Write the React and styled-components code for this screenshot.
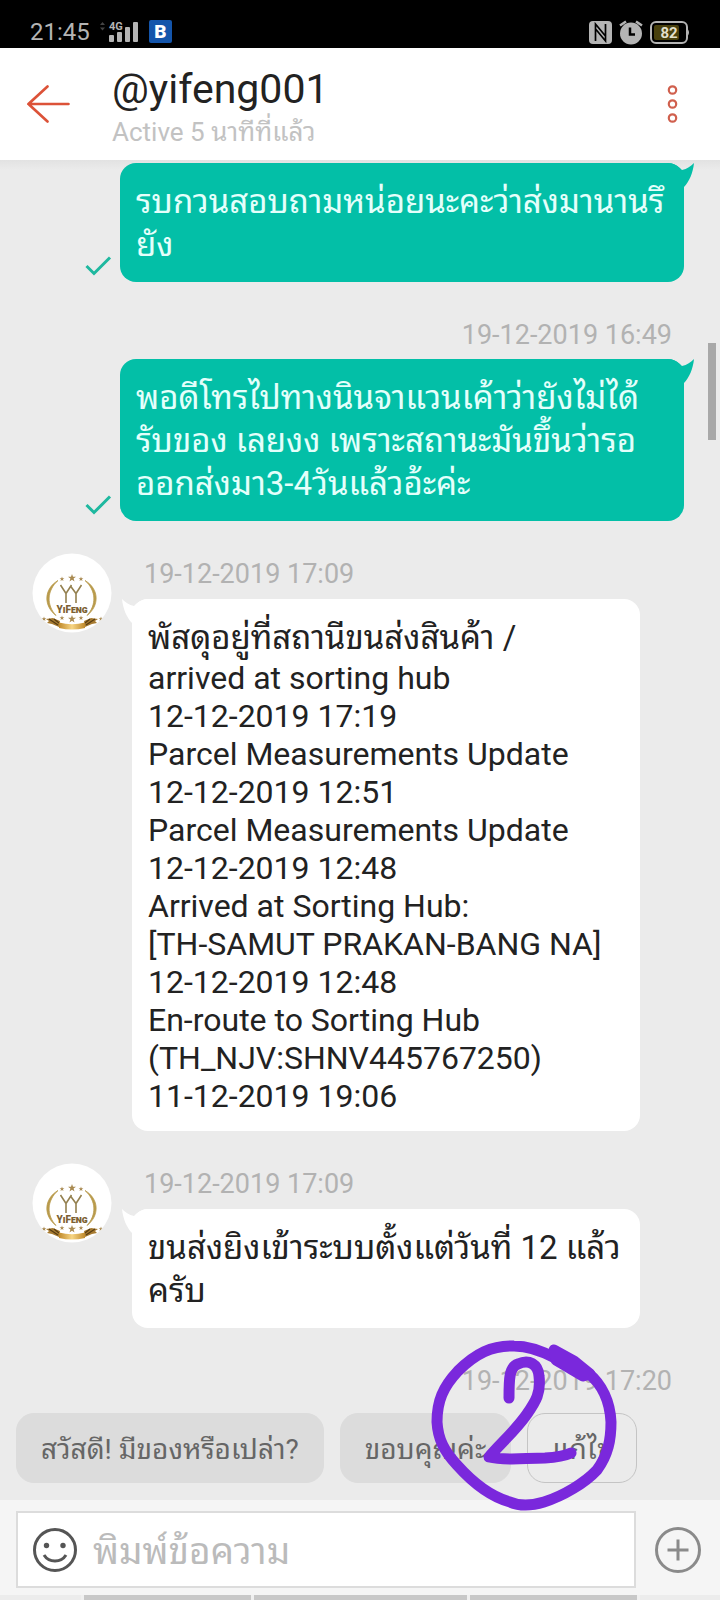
import React from 'react';
import styled, { createGlobalStyle } from 'styled-components';

const GlobalStyle = createGlobalStyle`
    * {
        box-sizing: border-box;
    }
    body {
        margin: 0;
        background: #ebebeb;
        font-family: Roboto, "Noto Sans Thai Looped", "Noto Looped Thai", Loma, Garuda, "Noto Sans Thai", "Noto Sans", sans-serif;
    }
    button, input {
        font-family: inherit;
        margin: 0;
        padding: 0;
        border: 0;
        background: none;
    }
    svg {
        display: block;
        flex: none;
    }
`;

const Page = styled.div`
    min-height: 100vh;
    display: flex;
    flex-direction: column;
    overflow: hidden;
`;
const StatusBar = styled.div`
    display: flex;
    align-items: center;
    justify-content: space-between;
    height: 48px;
    padding: 16px 30px 0;
    background: #000;
    color: #b4b4b4;
`;
const StatusGroup = styled.div`
    display: flex;
    align-items: center;
    gap: ${props => props.$gap}px;
`;
const Clock = styled.span`
    font-size: 24px;
    line-height: 32px;
`;
const TopBar = styled.header`
    display: flex;
    align-items: center;
    height: 112px;
    padding: 0 28px 0 27px;
    background: #fff;
`;
const IconButton = styled.button`
    display: flex;
    align-items: center;
    justify-content: center;
    flex: none;
`;
const Heading = styled.div`
    flex: 1;
    padding: 8px 0 0 42px;
`;
const Name = styled.h1`
    margin: 0;
    font-weight: 400;
    font-size: 41px;
    line-height: 48px;
    color: #222;
`;
const Activity = styled.p`
    margin: 0;
    font-size: 26px;
    line-height: 38px;
    color: #c2c2c2;
`;
const Chat = styled.main`
    position: relative;
    display: flex;
    flex-direction: column;
    gap: 32px;
    padding-top: 3px;
    background: linear-gradient(#e2e2e2, #ebebeb 10px);
`;
const ScrollThumb = styled.div`
    position: absolute;
    top: 183px;
    right: 4px;
    width: 8px;
    height: 97px;
    background: #a8a8a8;
`;
const Outgoing = styled.div`
    display: flex;
    flex-direction: column;
    gap: 8px;
    padding: 0 36px 0 85px;
`;
const SentRow = styled.div`
    display: flex;
    align-items: flex-end;
    gap: 8px;
`;
const Incoming = styled.div`
    display: flex;
    align-items: flex-start;
    gap: 20px;
    padding: 0 80px 0 32px;
`;
const Column = styled.div`
    flex: 1;
    min-width: 0;
    display: flex;
    flex-direction: column;
    gap: 9px;
`;
const Time = styled.time`
    padding: 5px 12px 0;
    font-size: 27px;
    line-height: 32px;
    color: #b2b2b2;
    text-align: ${props => props.$align};
`;
const Bubble = styled.div`
    position: relative;
    flex: 1;
    min-width: 0;
    padding: 17px 16px 16px;
    border-radius: 16px;
    background: ${props => props.$own ? '#03bfa7' : '#fff'};
    color: ${props => props.$own ? '#e4fffb' : '#222'};
`;
const Line = styled.div`
    white-space: nowrap;
    font-size: ${props => props.$thai ? 33 : 32}px;
    line-height: ${props => props.$thai ? 43 : 38}px;
`;
const Tail = styled.svg`
    position: absolute;
    top: 0;
    ${props => props.$own ? 'right: -10px;' : 'left: -10px; transform: scaleX(-1);'}
`;
const QuickReplies = styled.div`
    position: relative;
    display: flex;
    gap: 16px;
    padding: 16px 16px 17px;
`;
const Chip = styled.button`
    height: 70px;
    padding: 0 24px 3px;
    border-radius: 18px;
    border: 1px solid ${props => props.$outline ? '#c4c4c4' : '#dcdcdc'};
    background: ${props => props.$outline ? 'transparent' : '#dcdcdc'};
    font-size: 28px;
    color: #666;
    white-space: nowrap;
`;
const Scribble = styled.svg`
    position: absolute;
    top: -58px;
    left: 430px;
    pointer-events: none;
`;
const Composer = styled.form`
    display: flex;
    align-items: center;
    gap: 19px;
    padding: 11px 19px 7px 16px;
    background: #f5f5f5;
`;
const Field = styled.div`
    flex: 1;
    display: flex;
    align-items: center;
    gap: 16px;
    height: 77px;
    padding: 0 15px;
    border: 2px solid #dcdcdc;
    background: #fff;
`;
const TextInput = styled.input`
    flex: 1;
    min-width: 0;
    height: 66px;
    padding-top: 3px;
    font-size: 37px;
    color: #222;
    outline: 0;
    &::placeholder {
        color: #bbb;
        opacity: 1;
    }
`;
const Keyboard = styled.div`
    display: grid;
    grid-template-columns: 81px 167px 213px 167px 1fr;
    gap: 3px;
    height: 5px;
    background: #f0f0f0;
`;
const Key = styled.div`
    background: ${props => props.$dark ? '#c8c8c8' : '#ececec'};
`;

const STAR = 'M0 -4 L1 -1.3 L4 -1.2 L1.6 .6 L2.5 3.4 L0 1.8 L-2.5 3.4 L-1.6 .6 L-4 -1.2 L-1 -1.3Z';
const stars = [
    [40, 25, 1], [30, 26, 0.6], [49, 26, 0.6],
    [40, 66, 1], [30, 65, 0.6], [49, 65, 0.6], [12, 66, 0.6], [69, 66, 0.6],
];

const Avatar = () => (
    <svg width="80" height="80" viewBox="0 0 80 80" role="img" aria-label="YiFeng">
        <defs>
            <clipPath id="disc"><circle cx="40" cy="40" r="39.5"/></clipPath>
            <linearGradient id="gold">
                <stop offset="0" stopColor="#c08a2c"/>
                <stop offset=".5" stopColor="#f7d583"/>
                <stop offset="1" stopColor="#c08a2c"/>
            </linearGradient>
        </defs>
        <circle cx="40" cy="40" r="39.5" fill="#fff"/>
        <g clipPath="url(#disc)">
            <path d="M26 27.500 C11.500 36 11.500 53 24 62.500 C14.500 52 14.500 38 26 27.500Z M53 27.500 C67.500 36 67.500 53 55 62.500 C64.500 52 64.500 38 53 27.500Z" fill="#b99b4c" stroke="#b99b4c" strokeWidth=".8"/>
            <path d="M28.500 32 L34 40.500 L39.500 32 M34 40 V50 M38.500 33 L44 40.500 L49.500 32 M44 40 V50" fill="none" stroke="#94804f" strokeWidth="1.600"/>
            <text x="40" y="60" textAnchor="middle" fontSize="10" fontWeight="900" fontFamily="Roboto" fill="#7d6132" style={{ fontVariant: 'small-caps' }}>YiFeng</text>
            {stars.map(([x, y, s]) => (
                <path key={`${x}-${y}`} d={STAR} fill="#a98a51" transform={`translate(${x} ${y}) scale(${s})`}/>
            ))}
            <path d="M14 66 L21 65 L28 68 L27 74 L20 71 L15 70 L17 68Z M66 66 L59 65 L52 68 L53 74 L60 71 L65 70 L63 68Z" fill="#a77b31"/>
            <path d="M17 66 L26 72 M22 66 L27 70 M63 66 L54 72 M58 66 L53 70" stroke="#573c12" strokeWidth="1.200"/>
            <path d="M27 69.500 Q40 73 53 69.500 V75 Q40 78 27 75Z" fill="url(#gold)"/>
        </g>
    </svg>
);

const Balloon = ({ own, children }) => (
    <Bubble $own={own}>
        <Tail $own={own} width="30" height="25" viewBox="0 0 30 25" aria-hidden="true">
            <path d="M3 0 C10 0 14 3 18 7 C23 6 27 3 30 0 C29 10 25 19 20 24 H3Z" fill={own ? '#03bfa7' : '#fff'}/>
        </Tail>
        {children}
    </Bubble>
);

const Sent = ({ time, lines }) => (
    <Outgoing>
        {time && <Time $align="right">{time}</Time>}
        {lines && (
            <SentRow>
                <svg width="27" height="36" viewBox="0 0 27 36" aria-label="Sent">
                    <path d="M1.500 20 L9 27.500 L25 11.500" fill="none" stroke="#1eb89f" strokeWidth="3"/>
                </svg>
                <Balloon own>
                    {lines.map(line => <Line key={line} $thai>{line}</Line>)}
                </Balloon>
            </SentRow>
        )}
    </Outgoing>
);

const Received = ({ time, lines }) => (
    <Incoming>
        <Avatar/>
        <Column>
            <Time $align="left">{time}</Time>
            <Balloon>
                {lines.map((line, i) => (
                    <Line key={i} $thai={/[\u0e00-\u0e7f]/.test(line)}>{line}</Line>
                ))}
            </Balloon>
        </Column>
    </Incoming>
);

const tracking = [
    'พัสดุอยู่ที่สถานีขนส่งสินค้า /',
    'arrived at sorting hub',
    '12-12-2019 17:19',
    'Parcel Measurements Update',
    '12-12-2019 12:51',
    'Parcel Measurements Update',
    '12-12-2019 12:48',
    'Arrived at Sorting Hub:',
    '[TH-SAMUT PRAKAN-BANG NA]',
    '12-12-2019 12:48',
    'En-route to Sorting Hub',
    '(TH_NJV:SHNV445767250)',
    '11-12-2019 19:06',
];

const Status = () => (
    <StatusBar>
        <StatusGroup $gap={10}>
            <Clock>21:45</Clock>
            <svg width="39" height="24" viewBox="0 0 39 24" fill="#b4b4b4">
                <path d="M0 5 L2.500 2 L5 5Z M0 7.500 L2.500 10.500 L5 7.500Z" fill="#444"/>
                <text x="9" y="10" fontSize="11" fontWeight="700" fontFamily="Roboto">4G</text>
                <rect x="9" y="15" width="5" height="7" rx="1"/>
                <rect x="17" y="12" width="5" height="10" rx="1"/>
                <rect x="25" y="7" width="5" height="15" rx="1"/>
                <rect x="33" y="2" width="5" height="20" rx="1"/>
            </svg>
            <svg width="23" height="24" viewBox="0 0 23 24">
                <rect width="23" height="23" rx="2" fill="#1455ab"/>
                <text x="11.500" y="18" textAnchor="middle" fontSize="19" fontWeight="900" fontFamily="Roboto" fill="#fff">B</text>
            </svg>
        </StatusGroup>
        <StatusGroup $gap={7}>
            <svg width="23" height="23" viewBox="0 0 23 23">
                <rect width="23" height="23" rx="4" fill="#b4b4b4"/>
                <path d="M6.500 20 V3 L16 14.500 M16.500 3 V20 L7 8.500" fill="none" stroke="#000" strokeWidth="1.700"/>
            </svg>
            <svg width="24" height="25" viewBox="0 0 24 25">
                <circle cx="12" cy="13.500" r="11" fill="#b4b4b4"/>
                <path d="M1 5.500 L7 1.500 M23 5.500 L17 1.500" stroke="#b4b4b4" strokeWidth="2.500"/>
                <path d="M11 7.500 V14.500 H16" fill="none" stroke="#000" strokeWidth="2.500"/>
            </svg>
            <svg width="40" height="23" viewBox="0 0 40 23">
                <rect x="1" y="1" width="36" height="21" rx="5" fill="none" stroke="#b4b4b4" strokeWidth="2"/>
                <rect x="4" y="4" width="25" height="15" rx="2" fill="#48400d"/>
                <path d="M38 8.500 Q40 11.500 38 14.500Z" fill="#b4b4b4"/>
                <text x="19" y="16.500" textAnchor="middle" fontSize="15" fontWeight="700" fontFamily="Roboto" fill="#e2dfcb">82</text>
            </svg>
        </StatusGroup>
    </StatusBar>
);

const App = () => (
    <>
        <GlobalStyle/>
        <Page>
            <Status/>
            <TopBar>
                <IconButton aria-label="Back">
                    <svg width="43" height="38" viewBox="0 0 43 38" fill="none" stroke="#dc5238" strokeWidth="2.600" strokeLinecap="round">
                        <path d="M1.500 19 H41.500 M20.500 1.500 L1.500 19 L20.500 36.500"/>
                    </svg>
                </IconButton>
                <Heading>
                    <Name>@yifeng001</Name>
                    <Activity>Active 5 นาทีที่แล้ว</Activity>
                </Heading>
                <IconButton aria-label="More">
                    <svg width="40" height="38" viewBox="0 0 40 38" fill="none" stroke="#d0604e" strokeWidth="2.200">
                        <circle cx="20.500" cy="5" r="3.700"/>
                        <circle cx="20.500" cy="19" r="3.700"/>
                        <circle cx="20.500" cy="33" r="3.700"/>
                    </svg>
                </IconButton>
            </TopBar>
            <Chat>
                <Sent lines={['รบกวนสอบถามหน่อยนะคะว่าส่งมานานรึ', 'ยัง']}/>
                <Sent
                    time="19-12-2019 16:49"
                    lines={['พอดีโทรไปทางนินจาแวนเค้าว่ายังไม่ได้', 'รับของ เลยงง เพราะสถานะมันขึ้นว่ารอ', 'ออกส่งมา3-4วันแล้วอ้ะค่ะ']}
                />
                <Received time="19-12-2019 17:09" lines={tracking}/>
                <Received time="19-12-2019 17:09" lines={['ขนส่งยิงเข้าระบบตั้งแต่วันที่ 12 แล้ว', 'ครับ']}/>
                <Sent time="19-12-2019 17:20"/>
                <ScrollThumb/>
            </Chat>
            <QuickReplies>
                <Chip>สวัสดี! มีของหรือเปล่า?</Chip>
                <Chip>ขอบคุณค่ะ</Chip>
                <Chip $outline>แก้ไข</Chip>
                <Scribble width="190" height="174" viewBox="430 1339 190 174" fill="none" stroke="#7a28dc" strokeWidth="11" strokeLinecap="round" strokeLinejoin="round" aria-hidden="true">
                    <path d="M555 1358 C540 1350 528 1346 514 1346 C492 1345 475 1354 458 1371 C443 1387 437 1401 437 1422 C438 1439 444 1451 457 1465 C474 1484 492 1497 510 1502 Q524 1508 544 1502 C563 1496 585 1483 597 1470 C608 1455 611 1440 611 1422 C610 1402 602 1384 588 1373"/>
                    <path d="M554 1350 L574 1361 L590 1374 L583 1376 L556 1360Z" fill="#7a28dc"/>
                    <path d="M509 1398 C509 1380 509 1367 518 1364 C529 1359 538 1364 539 1376 C541 1393 536 1401 527 1414 C516 1430 500 1444 489 1457 C505 1461 525 1458 545 1458 Q562 1457 571 1453"/>
                </Scribble>
            </QuickReplies>
            <Composer onSubmit={e => e.preventDefault()}>
                <Field>
                    <IconButton type="button" aria-label="Emoji">
                        <svg width="44" height="44" viewBox="0 0 44 44" fill="none" stroke="#555" strokeWidth="3">
                            <circle cx="22" cy="22" r="20.500"/>
                            <path d="M11 27 C16 35 28 35 33 27"/>
                            <circle cx="13.500" cy="17.500" r="2.700" fill="#555" stroke="none"/>
                            <circle cx="30" cy="17.500" r="2.700" fill="#555" stroke="none"/>
                        </svg>
                    </IconButton>
                    <TextInput aria-label="พิมพ์ข้อความ" placeholder="พิมพ์ข้อความ"/>
                </Field>
                <IconButton type="button" aria-label="Attach">
                    <svg width="46" height="46" viewBox="0 0 46 46" fill="none" stroke="#8a8a8a" strokeWidth="3">
                        <circle cx="23" cy="23" r="21.500"/>
                        <path d="M12.500 23 H33.500 M23 12.500 V33.500"/>
                    </svg>
                </IconButton>
            </Composer>
            <Keyboard>
                <Key/>
                <Key $dark/>
                <Key $dark/>
                <Key $dark/>
                <Key/>
            </Keyboard>
        </Page>
    </>
);

export default App;
